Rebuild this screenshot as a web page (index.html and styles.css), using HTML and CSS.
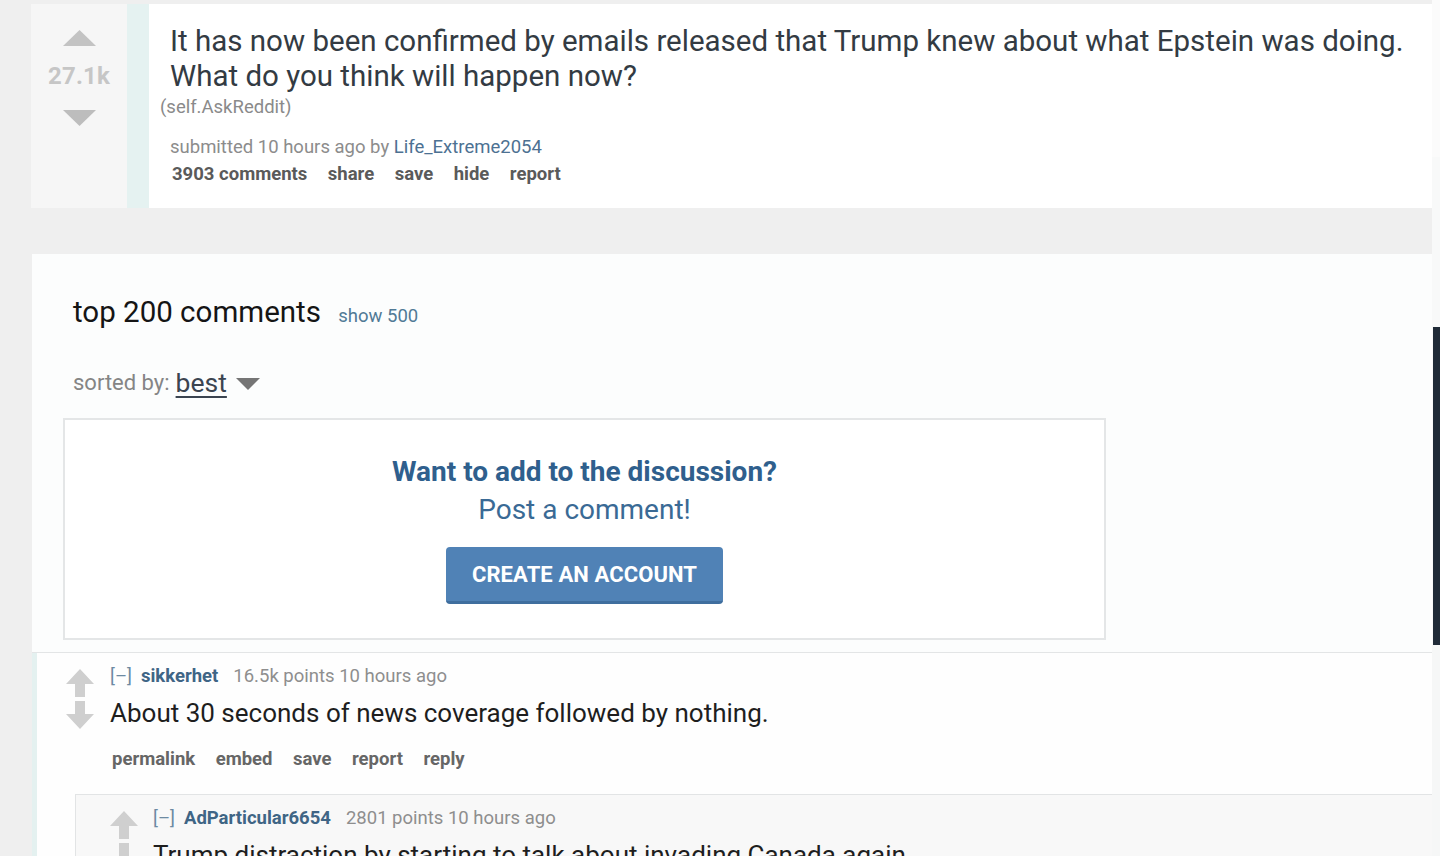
FILE: index.html
```html
<!DOCTYPE html>
<html lang="en">
<head>
<meta charset="utf-8">
<title>AskReddit</title>
<link rel="stylesheet" href="styles.css">
</head>
<body>
<div class="layout">
  <main class="main">
    <article class="post">
      <div class="post-vote">
        <svg class="tri" width="33" height="16" viewBox="0 0 33 16"><polygon points="16.5,0 33,16 0,16" fill="#c3c3c3"/></svg>
        <div class="score">27.1k</div>
        <svg class="tri" width="33" height="16" viewBox="0 0 33 16"><polygon points="0,0 33,0 16.5,16" fill="#bdbdbd"/></svg>
      </div>
      <div class="post-strip"></div>
      <div class="post-body">
        <h1 class="post-title">It has now been confirmed by emails released that Trump knew about what Epstein was doing. What do you think will happen now?</h1>
        <div class="domain">(self.AskReddit)</div>
        <div class="tagline">submitted 10 hours ago by <a class="user">Life_Extreme2054</a></div>
        <ul class="buttons post-buttons">
          <li>3903 comments</li><li>share</li><li>save</li><li>hide</li><li>report</li>
        </ul>
      </div>
    </article>

    <section class="comments-panel">
      <div class="comments-head">
        <h2 class="comments-title">top 200 comments <a class="show-more">show 500</a></h2>
        <div class="sorted">sorted by: <span class="sort-value">best</span>
          <svg class="sort-caret" width="24" height="12" viewBox="0 0 24 12"><polygon points="0,0 24,0 12,12" fill="#757575"/></svg>
        </div>
        <div class="cta">
          <div class="cta-strong">Want to add to the discussion?</div>
          <div class="cta-sub">Post a comment!</div>
          <button class="cta-btn">CREATE AN ACCOUNT</button>
        </div>
      </div>

      <div class="comment-list">
        <div class="comment">
          <div class="arrows">
            <svg width="28" height="28" viewBox="0 0 28 28"><polygon points="14,0 28,15 19,15 19,28 9,28 9,15 0,15" fill="#cfcfcf"/></svg>
            <svg width="28" height="28" viewBox="0 0 28 28"><polygon points="9,0 19,0 19,13 28,13 14,28 0,13 9,13" fill="#cfcfcf"/></svg>
          </div>
          <div class="entry">
            <div class="meta"><span class="toggle">[–]</span><a class="author">sikkerhet</a><span class="points">16.5k points 10 hours ago</span></div>
            <p class="text">About 30 seconds of news coverage followed by nothing.</p>
            <ul class="buttons">
              <li>permalink</li><li>embed</li><li>save</li><li>report</li><li>reply</li>
            </ul>
          </div>
          <div class="children">
            <div class="comment comment-child">
              <div class="arrows">
                <svg width="28" height="28" viewBox="0 0 28 28"><polygon points="14,0 28,15 19,15 19,28 9,28 9,15 0,15" fill="#cfcfcf"/></svg>
                <svg width="28" height="28" viewBox="0 0 28 28"><polygon points="9,0 19,0 19,13 28,13 14,28 0,13 9,13" fill="#cfcfcf"/></svg>
              </div>
              <div class="entry">
                <div class="meta"><span class="toggle">[–]</span><a class="author">AdParticular6654</a><span class="points">2801 points 10 hours ago</span></div>
                <p class="text">Trump distraction by starting to talk about invading Canada again.</p>
              </div>
            </div>
          </div>
        </div>
      </div>
    </section>
  </main>
  <div class="rail">
    <div class="rail-top"></div>
    <div class="rail-thumb"></div>
  </div>
</div>
</body>
</html>
```

FILE: styles.css
```css
* { box-sizing: border-box; }

html, body {
  margin: 0;
  padding: 0;
  height: 100%;
  overflow: hidden;
}

body {
  background: #efefef;
  font-family: Roboto, "Liberation Sans", sans-serif;
  color: #222;
}

.layout {
  display: flex;
  height: 856px;
}

.main {
  flex: 1;
  padding: 4px 0 0 31px;
  min-width: 0;
}

.rail {
  width: 8px;
  display: flex;
  flex-direction: column;
  background: #f6f7f7;
}

.rail-top {
  height: 327px;
  background: #f8f9f9;
  border-top: 157px solid #fbfbfb;
}

.rail-thumb {
  height: 318px;
  background: #1f2a37;
  margin-left: 1px;
}

/* ---------- Post ---------- */

.post {
  display: flex;
  height: 204px;
  background: #ffffff;
}

.post-vote {
  width: 96px;
  background: #f6f6f6;
  display: flex;
  flex-direction: column;
  align-items: center;
  padding-top: 26px;
}

.score {
  font-size: 24px;
  font-weight: 700;
  color: #c6c6c6;
  line-height: 30px;
  margin: 15px 0 19px;
  letter-spacing: 0.2px;
}

.post-strip {
  width: 22px;
  background: #e5f2f1;
}

.post-body {
  flex: 1;
  padding: 20px 14px 0 11px;
}

.post-title {
  margin: 0 0 0 10px;
  font-size: 29.5px;
  font-weight: 400;
  line-height: 35px;
  color: #333b43;
}

.domain {
  font-size: 18.5px;
  line-height: 24px;
  color: #8a8a8a;
  margin-top: 1px;
}

.tagline {
  font-size: 18.5px;
  line-height: 24px;
  color: #8c8c8c;
  margin: 16px 0 0 10px;
}

.user {
  color: #4d7192;
}

.buttons {
  list-style: none;
  margin: 0;
  padding: 0;
  display: flex;
  gap: 20.5px;
  font-size: 18.5px;
  font-weight: 700;
  line-height: 24px;
  color: #666;
}

.post-buttons {
  margin: 3px 0 0 12px;
  color: #5a5a5a;
}

/* ---------- Comments ---------- */

.comments-panel {
  margin-top: 46px;
  margin-left: 1px;
  background: #fcfdfd;
  min-height: 620px;
}

.comments-head {
  padding: 40px 0 12px 31px;
  border-bottom: 1px solid #e3e5e6;
}

.comments-title {
  margin: 0 0 0 10px;
  font-size: 29.5px;
  font-weight: 400;
  line-height: 36px;
  color: #151515;
}

.show-more {
  font-size: 18.5px;
  color: #517a96;
  margin-left: 10px;
}

.sorted {
  margin: 33px 0 0 10px;
  font-size: 22px;
  line-height: 32px;
  color: #858585;
  display: flex;
  align-items: center;
}

.sort-value {
  font-size: 26.5px;
  color: #3b4450;
  text-decoration: underline;
  text-underline-offset: 4px;
  text-decoration-thickness: 2px;
  margin-left: 6px;
}

.sort-caret {
  margin: 2px 0 0 9px;
}

.cta {
  margin-top: 19px;
  width: 1043px;
  height: 222px;
  border: 2px solid #e4e6e7;
  background: #ffffff;
  display: flex;
  flex-direction: column;
  align-items: center;
  padding-top: 33px;
}

.cta-strong {
  font-size: 28px;
  font-weight: 700;
  line-height: 38px;
  color: #2f5f8d;
}

.cta-sub {
  font-size: 28px;
  line-height: 38px;
  color: #3a6a95;
}

.cta-btn {
  margin-top: 18px;
  width: 277px;
  height: 57px;
  border: 0;
  border-bottom: 3px solid #3f6e9e;
  border-radius: 4px;
  background: #5082b6;
  color: #fff;
  font-family: Roboto, "Liberation Sans", sans-serif;
  font-size: 22px;
  font-weight: 700;
  letter-spacing: 0.1px;
}

.comment-list {
  border-left: 5px solid #e4f1f0;
  background: #fefefe;
  min-height: 220px;
}

.comment {
  display: grid;
  grid-template-columns: 28px 1fr;
  column-gap: 16px;
  padding: 11px 0 0 29px;
}

.arrows {
  display: flex;
  flex-direction: column;
  gap: 4px;
  padding-top: 5px;
}

.entry {
  min-width: 0;
}

.meta {
  font-size: 18.5px;
  line-height: 24px;
  display: flex;
  align-items: baseline;
}

.toggle {
  color: #6d8aa2;
  margin-right: 9px;
}

.author {
  color: #3f6585;
  font-weight: 700;
  margin-right: 15px;
}

.points {
  color: #8e8e8e;
}

.text {
  margin: 9px 0 0;
  font-size: 26px;
  line-height: 32px;
  color: #1e1e1e;
}

.entry .buttons {
  margin: 18px 0 0 2px;
}

.children {
  grid-column: 1 / -1;
  margin: 23px 0 0 9px;
}

.comment-child {
  border: 1px solid #e2e4e5;
  border-right: 0;
  background: #f8f8f8;
  padding-left: 34px;
  column-gap: 15px;
  min-height: 120px;
}

.comment-child .text {
  margin-top: 9px;
}
```
